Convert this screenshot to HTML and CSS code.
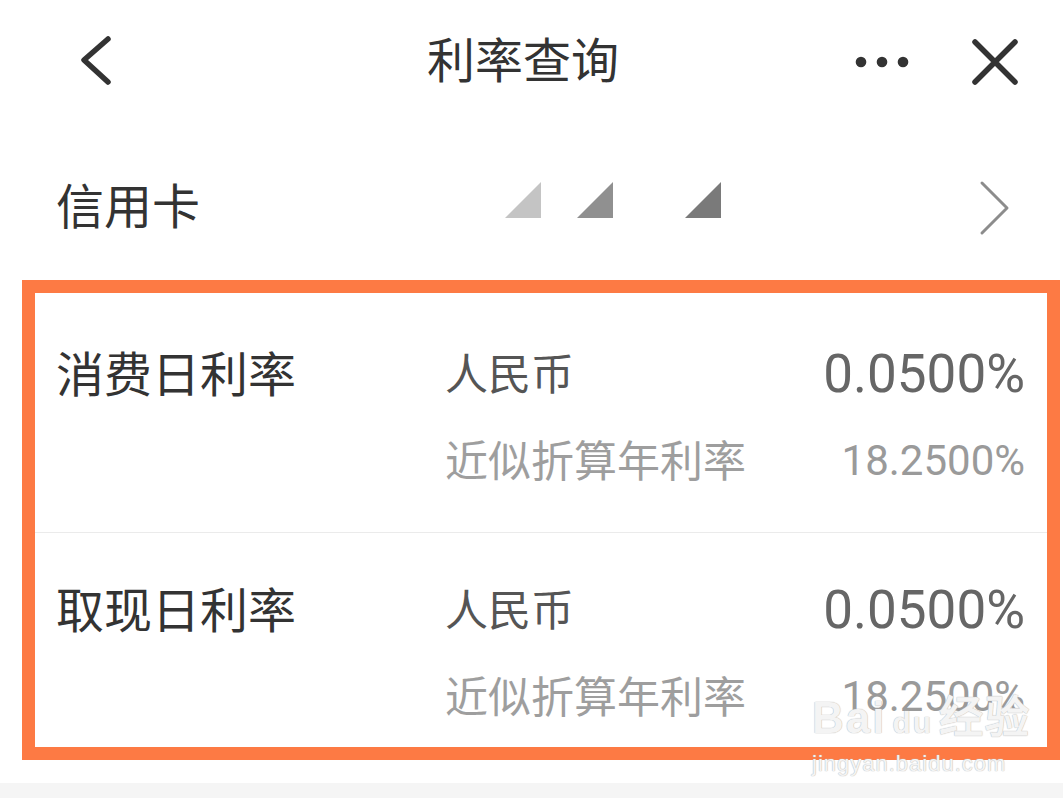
FILE: index.html
```html
<!DOCTYPE html>
<html lang="zh-CN">
<head>
    <meta charset="UTF-8">
    <title>利率查询</title>
    <link rel="stylesheet" href="styles.css">
</head>
<body>
    <div class="page">
        <div class="top-bar">
            <svg class="icon-back" width="60" height="60" viewBox="0 0 60 60">
                <path d="M40 9 L16 30 L40 52" fill="none" stroke="#333" stroke-width="5.5" stroke-linecap="round" stroke-linejoin="round"/>
            </svg>
            <div class="title">利率查询</div>
            <svg class="icon-more" width="60" height="20" viewBox="0 0 60 20">
                <circle cx="9" cy="10" r="5.3" fill="#333"/>
                <circle cx="30" cy="10" r="5.3" fill="#333"/>
                <circle cx="51" cy="10" r="5.3" fill="#333"/>
            </svg>
            <svg class="icon-close" width="50" height="50" viewBox="0 0 50 50">
                <path d="M5 5 L45 45 M45 5 L5 45" fill="none" stroke="#333" stroke-width="5.5" stroke-linecap="round"/>
            </svg>
        </div>

        <div class="card-row">
            <span class="card-name">信用卡</span>
            <div class="card-marks">
                <svg width="36" height="36" viewBox="0 0 36 36"><polygon points="0,36 36,0 36,36" fill="#c4c4c4"/></svg>
                <svg class="mark-gap" width="36" height="36" viewBox="0 0 36 36"><polygon points="0,36 36,0 36,36" fill="#909090"/></svg>
                <svg class="mark-wide" width="36" height="36" viewBox="0 0 36 36"><polygon points="0,36 36,0 36,36" fill="#7a7a7a"/></svg>
            </div>
            <svg class="icon-next" width="40" height="60" viewBox="0 0 40 60">
                <path d="M7 6 L32 31 L7 56" fill="none" stroke="#8c8c8c" stroke-width="3" stroke-linecap="round" stroke-linejoin="round"/>
            </svg>
        </div>

        <div class="rate-box">
            <div class="rate-row rate-row-first">
                <div class="rate-label">消费日利率</div>
                <div class="rate-currency">人民币</div>
                <div class="rate-value">0.0500%</div>
                <div class="rate-note">近似折算年利率</div>
                <div class="rate-year">18.2500%</div>
            </div>
            <div class="rate-row rate-row-last">
                <div class="rate-label">取现日利率</div>
                <div class="rate-currency">人民币</div>
                <div class="rate-value">0.0500%</div>
                <div class="rate-note">近似折算年利率</div>
                <div class="rate-year">18.2500%</div>
            </div>
        </div>

        <div class="bottom-band"></div>

        <div class="watermark">
            <div class="wm-logo">Bai<span class="wm-paw">du</span>经验</div>
            <div class="wm-url">jingyan.baidu.com</div>
        </div>
    </div>
</body>
</html>
```

FILE: styles.css
```css
html, body {
    margin: 0;
    background: #fff;
}

body {
    font-family: "Noto Sans CJK SC", "Noto Sans", sans-serif;
    color: #333;
}

.page {
    position: relative;
    width: 1063px;
    height: 798px;
    overflow: hidden;
}

.top-bar {
    display: flex;
    align-items: center;
    height: 124px;
    position: relative;
}

.icon-back {
    margin-left: 68px;
    margin-top: -4px;
}

.title {
    position: absolute;
    left: 0;
    right: 17px;
    top: -5px;
    line-height: 124px;
    text-align: center;
    font-size: 48px;
    color: #333;
    pointer-events: none;
}

.icon-more {
    margin-left: auto;
    margin-right: 58px;
}

.icon-close {
    margin-right: 43px;
}

.card-row {
    display: flex;
    align-items: center;
    height: 120px;
    margin-top: 23px;
    padding-left: 56px;
}

.card-name {
    font-size: 48px;
    color: #333;
    width: 449px;
    margin-top: -8px;
}

.card-marks {
    display: flex;
    align-items: center;
    margin-top: -14px;
}

.mark-gap {
    margin-left: 36px;
}

.mark-wide {
    margin-left: 72px;
}

.icon-next {
    margin-left: auto;
    margin-right: 48px;
}

.rate-box {
    margin: 13px 3px 0 22px;
    border: 13px solid #fd7a44;
    height: 454px;
}

.rate-row {
    display: grid;
    grid-template-columns: 389px 1fr auto;
    grid-template-rows: 60px 60px;
    row-gap: 25px;
    align-items: center;
    padding: 0 22px 0 21px;
    box-sizing: border-box;
}

.rate-row-first {
    height: 240px;
    padding-top: 52px;
    border-bottom: 1px solid #ebebeb;
}

.rate-row-last {
    height: 214px;
    padding-top: 48px;
}

.rate-label {
    font-size: 48px;
    color: #333;
    margin-top: -9px;
}

.rate-currency {
    font-size: 43px;
    color: #555;
    margin-top: -8px;
}

.rate-value {
    font-family: Roboto, "Noto Sans", sans-serif;
    font-size: 53px;
    color: #666;
    text-align: right;
    margin-top: -2px;
}

.rate-note {
    grid-column: 2;
    font-size: 43px;
    color: #9e9e9e;
    margin-top: -5px;
}

.rate-year {
    font-family: Roboto, "Noto Sans", sans-serif;
    font-size: 42px;
    color: #9a9a9a;
    text-align: right;
}

.bottom-band {
    position: absolute;
    left: 0;
    right: 0;
    top: 783px;
    bottom: 0;
    background: #f5f5f5;
}

/* watermark laid over the screenshot */
.watermark {
    position: absolute;
    left: 812px;
    top: 690px;
    color: rgba(255, 255, 255, 0.85);
    text-shadow: 0 0 1px #bbb, 0 0 1px #bbb;
    font-family: "Liberation Sans", sans-serif;
}

.wm-logo {
    font-size: 44px;
    line-height: 56px;
    font-weight: bold;
    letter-spacing: 2px;
}

.wm-logo .wm-paw {
    font-size: 30px;
    margin: 0 6px;
}

.wm-url {
    font-size: 22px;
    line-height: 26px;
    letter-spacing: 1px;
}
```
